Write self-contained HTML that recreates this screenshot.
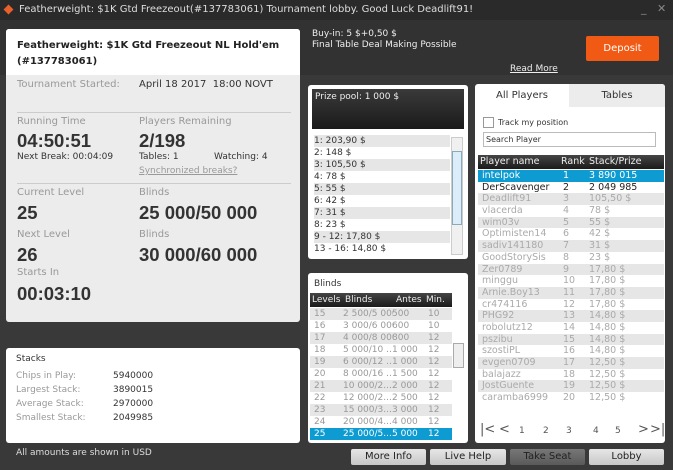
<!DOCTYPE html>
<html><head><meta charset="utf-8"><style>
*{margin:0;padding:0;box-sizing:border-box}
body{width:700px;height:470px;background:#fff;font-family:"DejaVu Sans","Liberation Sans",sans-serif;font-size:9px;position:relative;overflow:hidden}
.abs{position:absolute}
#win{left:0;top:0;width:673px;height:470px;background:#393939}
#title{left:0;top:0;width:673px;height:20px;background:#2a2a2a;color:#ddd;font-size:10px;line-height:20px;padding-left:19px}
#hdr{left:0;top:20px;width:673px;height:55px;background:#323232}
.gray{color:#999}
.dark{color:#333}
.big{font-family:"Liberation Sans",sans-serif;font-size:18.5px;font-weight:bold;color:#333}
.rows div{height:12px;line-height:12px;white-space:nowrap}
.rows div:nth-child(odd){background:#e6e6e6}
.btn{top:449px;height:16px;background:linear-gradient(#e6e6e6,#c8c8c8);border-radius:2px;text-align:center;line-height:16px;font-size:10px;color:#222}
.p div{position:relative;height:11.7px!important;line-height:11.7px!important}.p span{position:absolute}.p span:nth-child(1){left:4px}.p span:nth-child(2){left:85px}.p span:nth-child(3){left:111px}
.b div{position:relative}.b span{position:absolute}.b span:nth-child(1){left:4px}.b span:nth-child(2){left:33px;width:50px;overflow:hidden}.b span:nth-child(3){left:82px}.b span:nth-child(4){left:118px}
</style></head><body>
<div id="win" class="abs"></div>
<div id="hdr" class="abs"></div>
<div id="title" class="abs">Featherweight: $1K Gtd Freezeout(#137783061) Tournament lobby. Good Luck Deadlift91!</div>
<div class="abs" style="left:5px;top:6px;width:7px;height:7px;background:#e8602a;transform:rotate(45deg)"></div>
<div class="abs" style="left:641px;top:2px;color:#888;font-size:11px">_&nbsp;&nbsp;&nbsp;✕</div>
<div class="abs" style="left:312px;top:29px;color:#eee;font-size:9px;line-height:11px">Buy-in: 5 $+0,50 $<br>Final Table Deal Making Possible</div>
<div class="abs" style="left:510px;top:64px;color:#eee;text-decoration:underline">Read More</div>
<div class="abs" style="left:586px;top:36px;width:73px;height:25px;background:#f05a14;border-radius:2px;color:#fff;font-size:10px;text-align:center;line-height:25px">Deposit</div>

<div class="abs" style="left:6px;top:29px;width:294px;height:293px;background:#ececec;border-radius:3px"></div>
<div class="abs" style="left:6px;top:29px;width:294px;height:46px;background:#fff;border-radius:3px 3px 0 0;padding:9px 11px;font-weight:bold;font-size:10px;line-height:16px;color:#222">Featherweight: $1K Gtd Freezeout NL Hold'em<br>(#137783061)</div>
<div class="abs gray" style="left:17px;top:79px;font-size:10px">Tournament Started:</div>
<div class="abs dark" style="left:139px;top:79px;font-size:10px">April 18 2017&nbsp; 18:00 NOVT</div>
<div class="abs" style="left:17px;top:112px;width:274px;height:1px;background:#ccc"></div>
<div class="abs gray" style="left:17px;top:116px;font-size:10px">Running Time</div>
<div class="abs gray" style="left:139px;top:116px;font-size:10px">Players Remaining</div>
<div class="abs big" style="left:17px;top:130px">04:50:51</div>
<div class="abs big" style="left:139px;top:130px">2/198</div>
<div class="abs dark" style="left:17px;top:152px">Next Break: 00:04:09</div>
<div class="abs dark" style="left:139px;top:152px">Tables: 1</div>
<div class="abs dark" style="left:214px;top:152px">Watching: 4</div>
<div class="abs gray" style="left:139px;top:166px;text-decoration:underline">Synchronized breaks?</div>
<div class="abs" style="left:17px;top:183px;width:274px;height:1px;background:#ccc"></div>
<div class="abs gray" style="left:17px;top:187px;font-size:10px">Current Level</div>
<div class="abs gray" style="left:139px;top:187px;font-size:10px">Blinds</div>
<div class="abs big" style="left:17px;top:202px">25</div>
<div class="abs big" style="left:139px;top:202px">25 000/50 000</div>
<div class="abs gray" style="left:17px;top:229px;font-size:10px">Next Level</div>
<div class="abs gray" style="left:139px;top:229px;font-size:10px">Blinds</div>
<div class="abs big" style="left:17px;top:244px">26</div>
<div class="abs big" style="left:139px;top:244px">30 000/60 000</div>
<div class="abs gray" style="left:17px;top:267px;font-size:10px">Starts In</div>
<div class="abs big" style="left:17px;top:283px">00:03:10</div>

<div class="abs" style="left:6px;top:348px;width:294px;height:95px;background:#fff;border-radius:3px"></div>
<div class="abs dark" style="left:16px;top:354px">Stacks</div>
<div class="abs gray" style="left:16px;top:369px;line-height:14px">Chips in Play:<br>Largest Stack:<br>Average Stack:<br>Smallest Stack:</div>
<div class="abs dark" style="left:113px;top:369px;line-height:14px">5940000<br>3890015<br>2970000<br>2049985</div>
<div class="abs" style="left:16px;top:448px;color:#ddd">All amounts are shown in USD</div>

<div class="abs" style="left:308px;top:85px;width:160px;height:174px;background:#fff;border-radius:3px"></div>
<div class="abs" style="left:312px;top:89px;width:152px;height:40px;background:linear-gradient(#3a3a3a,#1a1a1a);color:#eee;padding:3px 3px">Prize pool: 1 000 $</div>
<div class="abs rows dark" style="left:312px;top:135px;width:138px;padding-left:2px">
<div>1: 203,90 $</div><div>2: 148 $</div><div>3: 105,50 $</div><div>4: 78 $</div><div>5: 55 $</div><div>6: 42 $</div><div>7: 31 $</div><div>8: 23 $</div><div>9 - 12: 17,80 $</div><div>13 - 16: 14,80 $</div></div>
<div class="abs" style="left:451px;top:137px;width:12px;height:118px;background:#f0f0f0;border:1px solid #ccc"></div>
<div class="abs" style="left:452px;top:151px;width:10px;height:74px;background:#dcecf8;border:1px solid #8ab"></div>

<div class="abs" style="left:308px;top:273px;width:160px;height:170px;background:#fff;border-radius:3px"></div>
<div class="abs dark" style="left:314px;top:279px">Blinds</div>
<div class="abs" style="left:310px;top:293px;width:142px;height:14px;background:linear-gradient(#444,#1a1a1a);color:#eee;line-height:14px;white-space:nowrap"><span class="abs" style="left:2px">Levels</span><span class="abs" style="left:35px">Blinds</span><span class="abs" style="left:86px">Antes</span><span class="abs" style="left:116px">Min.</span></div>
<div class="abs rows b gray" style="left:310px;top:308px;width:142px">
<div><span>15</span><span>2 500/5 000</span><span>500</span><span>10</span></div>
<div><span>16</span><span>3 000/6 000</span><span>600</span><span>10</span></div>
<div><span>17</span><span>4 000/8 000</span><span>800</span><span>12</span></div>
<div><span>18</span><span>5 000/10 ..</span><span>1 000</span><span>12</span></div>
<div><span>19</span><span>6 000/12 ..</span><span>1 000</span><span>12</span></div>
<div><span>20</span><span>8 000/16 ..</span><span>1 500</span><span>12</span></div>
<div><span>21</span><span>10 000/2...</span><span>2 000</span><span>12</span></div>
<div><span>22</span><span>12 000/2...</span><span>2 500</span><span>12</span></div>
<div><span>23</span><span>15 000/3...</span><span>3 000</span><span>12</span></div>
<div><span>24</span><span>20 000/4...</span><span>4 000</span><span>12</span></div>
<div style="background:#0d9bd1;color:#fff"><span>25</span><span>25 000/5...</span><span>5 000</span><span>12</span></div></div>
<div class="abs" style="left:453px;top:343px;width:11px;height:25px;background:#eee;border:1px solid #aaa"></div>

<div class="abs" style="left:475px;top:84px;width:190px;height:359px;background:#fff;border-radius:3px"></div>
<div class="abs" style="left:569px;top:84px;width:96px;height:23px;background:#ececec;border-radius:0 3px 0 0;text-align:center;line-height:23px;font-size:10px;color:#333">Tables</div>
<div class="abs" style="left:475px;top:84px;width:94px;height:23px;text-align:center;line-height:23px;font-size:10px;color:#333">All Players</div>
<div class="abs" style="left:483px;top:117px;width:11px;height:11px;border:1px solid #999"></div>
<div class="abs dark" style="left:498px;top:118px;font-size:8px">Track my position</div>
<div class="abs" style="left:483px;top:132px;width:173px;height:15px;border:1px solid #bbb;font-size:8px;line-height:13px;padding-left:2px;color:#333">Search Player</div>
<div class="abs" style="left:478px;top:155px;width:186px;height:14px;background:linear-gradient(#444,#1a1a1a);color:#eee;line-height:14px;font-size:9.5px;white-space:nowrap"><span class="abs" style="left:2px">Player name</span><span class="abs" style="left:83px">Rank</span><span class="abs" style="left:111px">Stack/Prize</span></div>
<div class="abs rows p" style="left:478px;top:170px;width:186px;font-size:9.5px;color:#aaa">
<div style="background:#0d9bd1;color:#fff"><span>intelpok</span><span>1</span><span>3 890 015</span></div>
<div style="background:#fff;color:#222"><span>DerScavenger</span><span>2</span><span>2 049 985</span></div>
<div><span>Deadlift91</span><span>3</span><span>105,50 $</span></div>
<div style="background:#fff"><span>vlacerda</span><span>4</span><span>78 $</span></div>
<div><span>wim03v</span><span>5</span><span>55 $</span></div>
<div style="background:#fff"><span>Optimisten14</span><span>6</span><span>42 $</span></div>
<div><span>sadiv141180</span><span>7</span><span>31 $</span></div>
<div style="background:#fff"><span>GoodStorySis</span><span>8</span><span>23 $</span></div>
<div><span>Zer0789</span><span>9</span><span>17,80 $</span></div>
<div style="background:#fff"><span>minggu</span><span>10</span><span>17,80 $</span></div>
<div><span>Arnie.Boy13</span><span>11</span><span>17,80 $</span></div>
<div style="background:#fff"><span>cr474116</span><span>12</span><span>17,80 $</span></div>
<div><span>PHG92</span><span>13</span><span>14,80 $</span></div>
<div style="background:#fff"><span>robolutz12</span><span>14</span><span>14,80 $</span></div>
<div><span>pszibu</span><span>15</span><span>14,80 $</span></div>
<div style="background:#fff"><span>szostiPL</span><span>16</span><span>14,80 $</span></div>
<div><span>evgen0709</span><span>17</span><span>12,50 $</span></div>
<div style="background:#fff"><span>balajazz</span><span>18</span><span>12,50 $</span></div>
<div><span>JostGuente</span><span>19</span><span>12,50 $</span></div>
<div style="background:#fff"><span>caramba6999</span><span>20</span><span>12,50 $</span></div>
</div>
<div class="abs" style="left:480px;top:422px;width:182px;font-size:13px;color:#555;white-space:nowrap">
<span class="abs" style="left:0">|&lt;</span><span class="abs" style="left:19px">&lt;</span><span class="abs" style="left:39px;top:4px;font-size:9px">1</span><span class="abs" style="left:63px;top:4px;font-size:9px">2</span><span class="abs" style="left:86px;top:4px;font-size:9px">3</span><span class="abs" style="left:113px;top:4px;font-size:9px">4</span><span class="abs" style="left:135px;top:4px;font-size:9px">5</span><span class="abs" style="left:158px">&gt;</span><span class="abs" style="left:170px">&gt;|</span></div>

<div class="abs btn" style="left:351px;width:75px">More Info</div>
<div class="abs btn" style="left:430px;width:76px">Live Help</div>
<div class="abs btn" style="left:510px;width:75px;background:linear-gradient(#777,#5a5a5a)">Take Seat</div>
<div class="abs btn" style="left:589px;width:75px">Lobby</div>
</body></html>
